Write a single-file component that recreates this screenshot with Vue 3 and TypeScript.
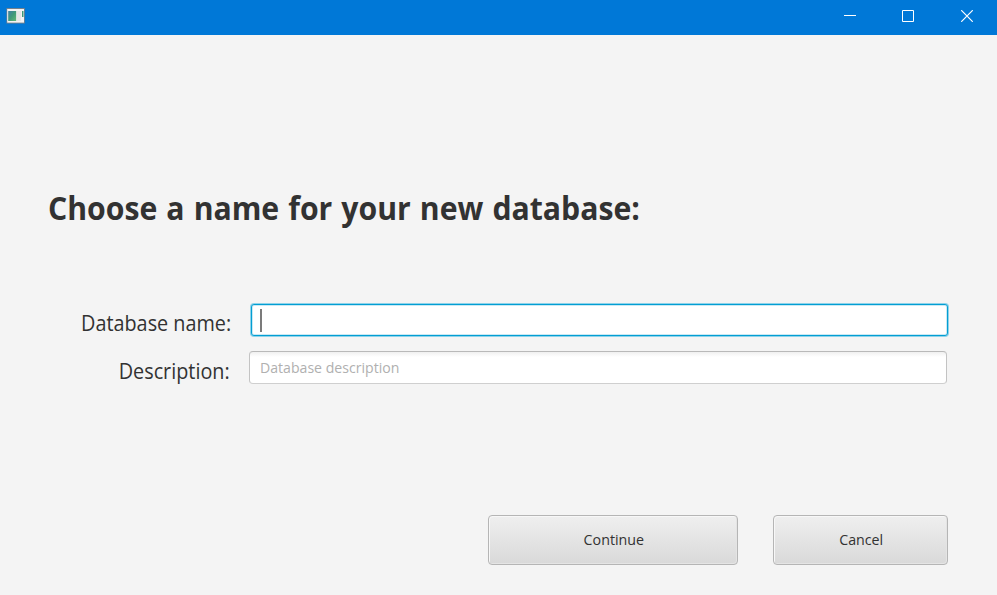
<script setup lang="ts">
import { ref } from 'vue'

const databaseName = ref('')
const description = ref('')
</script>

<template>
  <div class="window">
    <header class="titlebar">
      <svg class="app-icon" width="19" height="16" viewBox="0 0 19 16">
        <defs>
          <linearGradient id="pane" x1="0" y1="0" x2="1" y2="1">
            <stop offset="0" stop-color="#3f7fa6" />
            <stop offset="0.5" stop-color="#3f9a78" />
            <stop offset="1" stop-color="#62b877" />
          </linearGradient>
        </defs>
        <rect x="0.5" y="0" width="18.3" height="15.5" fill="#75808a" />
        <rect x="1.2" y="1" width="16.8" height="13.6" fill="#f3f3f3" />
        <rect x="2.2" y="3" width="8" height="10" fill="url(#pane)" />
        <rect x="11" y="3" width="4" height="10" fill="#e6e6e6" />
        <rect x="16" y="3" width="1.5" height="6" fill="#3f9a78" />
      </svg>
      <div class="controls">
        <button class="control" aria-label="Minimize">
          <svg width="12" height="12" viewBox="0 0 12 12"><path d="M0 5.5H12" /></svg>
        </button>
        <button class="control" aria-label="Maximize">
          <svg width="12" height="12" viewBox="0 0 12 12"><path d="M.5 .5H11.5V11.5H.5Z" /></svg>
        </button>
        <button class="control close" aria-label="Close">
          <svg width="12" height="12" viewBox="0 0 12 12"><path d="M.2 .2L11.8 11.8M11.8 .2L.2 11.8" /></svg>
        </button>
      </div>
    </header>
    <main class="content">
      <h1 class="heading"><span>Choose a name for your new database:</span></h1>
      <form class="form" @submit.prevent>
        <label class="row name-row">
          <span class="label name-label"><span>Database name:</span></span>
          <span class="field focused">
            <input v-model="databaseName" type="text" />
            <i class="caret"></i>
          </span>
        </label>
        <label class="row">
          <span class="label description-label"><span>Description:</span></span>
          <span class="field">
            <input v-model="description" type="text" placeholder="Database description" />
          </span>
        </label>
      </form>
      <div class="actions">
        <button class="action continue"><span>Continue</span></button>
        <button class="action cancel"><span>Cancel</span></button>
      </div>
    </main>
  </div>
</template>

<style>
body {
  overflow: hidden;
  background: #f4f4f4;
}
</style>

<style scoped>
.window {
  box-sizing: border-box;
  width: 997px;
  height: 595px;
  display: flex;
  flex-direction: column;
  background: #f4f4f4;
  color: #323232;
  font-family: "Segoe UI", "Open Sans", "Noto Sans", sans-serif;
}
.titlebar {
  flex: none;
  height: 35px;
  display: flex;
  justify-content: space-between;
  background: #0078d7;
}
.app-icon {
  margin: 8px 0 0 6px;
}
.controls {
  display: flex;
  align-items: flex-start;
}
.control {
  width: 58px;
  height: 32px;
  padding: 0;
  border: 0;
  display: flex;
  align-items: center;
  justify-content: center;
  background: none;
}
.close {
  width: 60px;
}
.control path {
  fill: none;
  stroke: #fff;
  stroke-width: 1;
}
.close path {
  stroke-width: 1.2;
}
.content {
  flex: 1;
  display: flex;
  flex-direction: column;
  padding: 149px 49px 30px 48px;
}
.heading {
  margin: 0;
  height: 50px;
  line-height: 47px;
  font-size: 33px;
  font-weight: 700;
  word-spacing: 1.3px;
  white-space: nowrap;
}
.heading span {
  display: inline-block;
  transform: scaleX(0.915);
  transform-origin: left;
}
.form {
  margin-top: 70px;
  display: flex;
  flex-direction: column;
  gap: 15px;
}
.row {
  display: flex;
  height: 33px;
}
.name-row {
  height: 32px;
}
.label {
  box-sizing: border-box;
  width: 201px;
  padding-right: 19px;
  line-height: 40px;
  text-align: right;
  font-size: 21px;
  white-space: nowrap;
}
.label span {
  display: inline-block;
  transform: scaleX(0.943);
  transform-origin: right;
}
.name-label {
  width: 203px;
  padding-right: 20px;
  line-height: 38px;
}
.field {
  box-sizing: border-box;
  display: flex;
  align-items: center;
  width: 698px;
  padding-left: 10px;
  border: 1px solid #c3c3c3;
  border-top-color: #b9b9b9;
  border-bottom-color: #cfcfcf;
  border-radius: 4px;
  background: linear-gradient(#f0f0f0, #fff 5px);
}
.focused {
  position: relative;
  width: 697px;
  border-color: #039ed3;
  border-radius: 3px;
  background: #fff;
  box-shadow: 0 0 0 1px #8fd3ea, inset 0 0 0 1px #c9e9f4;
}
.field input {
  width: 100%;
  padding: 0 0 2px;
  border: 0;
  outline: 0;
  background: transparent;
  color: #323232;
  font-family: inherit;
  font-size: 15px;
  transform: scaleX(0.94);
  transform-origin: left;
}
.field input::placeholder {
  color: #b0b0b0;
  opacity: 1;
}
.caret {
  position: absolute;
  left: 8px;
  top: 4px;
  width: 2px;
  height: 23px;
  background: #7b7b7b;
}
.actions {
  margin-top: auto;
  display: flex;
  justify-content: flex-end;
  gap: 35px;
}
.action {
  box-sizing: border-box;
  height: 50px;
  padding: 0 0 2px 1px;
  border: 1px solid #b5b5b5;
  border-radius: 4px;
  background: linear-gradient(#efefef, #d9d9d9);
  box-shadow: inset 1px 1px 0 #f7f7f7, inset -1px -1px 0 #e4e4e4;
  color: #323232;
  font-family: inherit;
  font-size: 15px;
}
.action span {
  display: inline-block;
  transform: scaleX(0.95);
}
.continue {
  width: 250px;
}
.cancel {
  width: 175px;
}
</style>
